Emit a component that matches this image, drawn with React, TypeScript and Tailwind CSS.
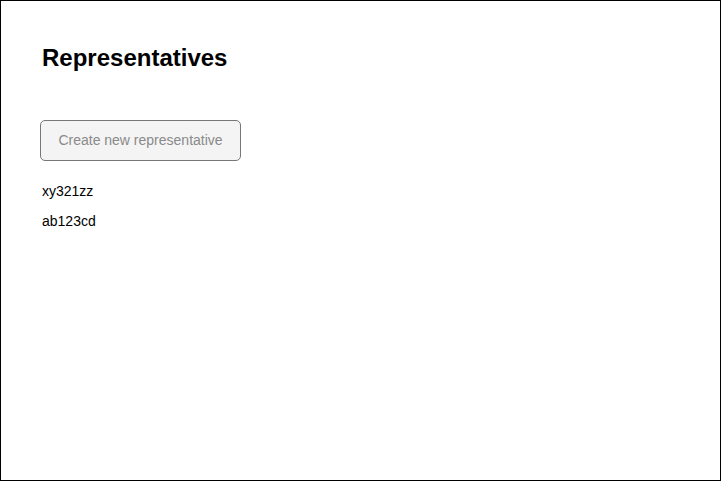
export default function App() {
  return (
    <div
      className="box-border w-[721px] h-[481px] border border-black bg-white text-black overflow-hidden"
      style={{ fontFamily: '"Liberation Sans", Arial, sans-serif' }}
    >
      <div className="pl-[41px] pt-[43px] flex flex-col items-start">
        <h1 className="text-[24px] leading-[28px] font-bold">Representatives</h1>
        <button
          type="button"
          className="mt-[48px] ml-[-2px] box-border w-[201px] h-[41px] rounded-[5px] border border-[#777777] bg-[#f4f4f4] text-[14px] text-[#8a8a8a] flex items-center justify-center"
        >
          Create new representative
        </button>
        <div className="mt-[20px] flex flex-col gap-[10px] text-[14px] leading-[20px]">
          <div>xy321zz</div>
          <div>ab123cd</div>
        </div>
      </div>
    </div>
  );
}
